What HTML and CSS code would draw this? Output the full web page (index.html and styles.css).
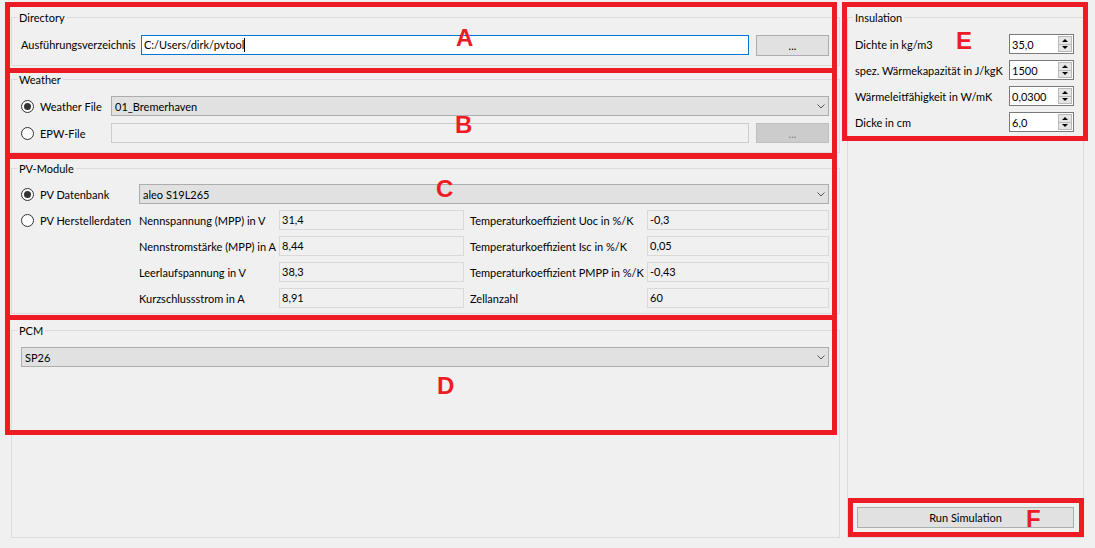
FILE: index.html
```html
<!DOCTYPE html>
<html>
<head>
<meta charset="utf-8">
<link rel="stylesheet" href="styles.css">
</head>
<body>
<div class="window">
  <div class="left">
    <div class="group g-dir">
      <div class="gtitle">Directory</div>
      <div class="dir-row">
        <span class="lbl">Ausführungsverzeichnis</span>
        <div class="field focused">C:/Users/dirk/pvtool<span class="caret"></span></div>
        <div class="btn">...</div>
      </div>
    </div>

    <div class="group g-weather">
      <div class="gtitle">Weather</div>
      <div class="weather-grid">
        <label class="opt"><span class="radio on"></span>Weather File</label>
        <div class="combo span2"><span>01_Bremerhaven</span><svg class="chev" width="8" height="5" viewBox="0 0 8 5"><polyline points="0.5,0.5 4,4 7.5,0.5" fill="none" stroke="#555" stroke-width="1"/></svg></div>
        <label class="opt"><span class="radio"></span>EPW-File</label>
        <div class="field disabled"></div>
        <div class="btn btn-dis">...</div>
      </div>
    </div>

    <div class="group g-pv">
      <div class="gtitle">PV-Module</div>
      <div class="pv-grid">
        <label class="opt"><span class="radio on"></span>PV Datenbank</label>
        <div class="combo pv-combo"><span>aleo S19L265</span><svg class="chev" width="8" height="5" viewBox="0 0 8 5"><polyline points="0.5,0.5 4,4 7.5,0.5" fill="none" stroke="#555" stroke-width="1"/></svg></div>

        <label class="opt"><span class="radio"></span>PV Herstellerdaten</label>
        <span class="plbl">Nennspannung (MPP) in V</span>
        <div class="field ro">31,4</div>
        <span class="plbl plbl2">Temperaturkoeffizient Uoc in %/K</span>
        <div class="field ro">-0,3</div>

        <span class="plbl c2">Nennstromstärke (MPP) in A</span>
        <div class="field ro">8,44</div>
        <span class="plbl plbl2">Temperaturkoeffizient Isc in %/K</span>
        <div class="field ro">0,05</div>

        <span class="plbl c2">Leerlaufspannung in V</span>
        <div class="field ro">38,3</div>
        <span class="plbl plbl2">Temperaturkoeffizient PMPP in %/K</span>
        <div class="field ro">-0,43</div>

        <span class="plbl c2">Kurzschlussstrom in A</span>
        <div class="field ro">8,91</div>
        <span class="plbl plbl2">Zellanzahl</span>
        <div class="field ro">60</div>
      </div>
    </div>

    <div class="group g-pcm">
      <div class="gtitle">PCM</div>
      <div class="combo"><span>SP26</span><svg class="chev" width="8" height="5" viewBox="0 0 8 5"><polyline points="0.5,0.5 4,4 7.5,0.5" fill="none" stroke="#555" stroke-width="1"/></svg></div>
    </div>
  </div>

  <div class="right">
    <div class="group g-ins">
      <div class="gtitle">Insulation</div>
      <div class="ins-rows">
        <div class="ins-row"><span class="ilbl">Dichte in kg/m3</span><div class="spin"><span class="sv">35,0</span><span class="sbtns"><span class="sb up"></span><span class="sb dn"></span></span></div></div>
        <div class="ins-row"><span class="ilbl">spez. Wärmekapazität in J/kgK</span><div class="spin"><span class="sv">1500</span><span class="sbtns"><span class="sb up"></span><span class="sb dn"></span></span></div></div>
        <div class="ins-row"><span class="ilbl">Wärmeleitfähigkeit in W/mK</span><div class="spin"><span class="sv">0,0300</span><span class="sbtns"><span class="sb up"></span><span class="sb dn"></span></span></div></div>
        <div class="ins-row"><span class="ilbl">Dicke in cm</span><div class="spin"><span class="sv">6,0</span><span class="sbtns"><span class="sb up"></span><span class="sb dn"></span></span></div></div>
      </div>
      <div class="spacer"></div>
      <div class="btn run">Run Simulation</div>
    </div>
  </div>

  <div class="mark mark-a"></div>
  <div class="mark mark-b"></div>
  <div class="mark mark-c"></div>
  <div class="mark mark-d"></div>
  <div class="mark mark-e"></div>
  <div class="mark mark-f"></div>
  <span class="tag tag-a">A</span>
  <span class="tag tag-b">B</span>
  <span class="tag tag-c">C</span>
  <span class="tag tag-d">D</span>
  <span class="tag tag-e">E</span>
  <span class="tag tag-f">F</span>
</div>
</body>
</html>
```

FILE: styles.css
```css
* { box-sizing: border-box; }
html, body { margin: 0; padding: 0; }
body {
  background: #f0f0f0;
  font-family: Lato, "Noto Sans", sans-serif;
  font-size: 11px;
  color: #000;
}
.window {
  position: relative;
  width: 1095px;
  height: 548px;
  display: flex;
  gap: 7px;
  padding: 17px 0 10px 11px;
  overflow: hidden;
}
.left { width: 829px; display: flex; flex-direction: column; }
.right { width: 237px; display: flex; flex-direction: column; }

.group { border: 1px solid #dcdcdc; padding: 0 10px 0 9px; }
.gtitle {
  width: max-content;
  height: 14px;
  line-height: 14px;
  margin: -7px 0 0 -4px;
  padding: 0 2px;
  background: #f0f0f0;
}
.g-dir { padding-bottom: 9px; }
.g-weather { margin-top: 13px; padding-bottom: 9px; }
.g-pv { margin-top: 15px; padding-bottom: 5px; }
.g-pcm { margin-top: 16px; flex: 1; }

.dir-row { display: flex; align-items: flex-start; margin-top: 10px; }
.lbl { width: 120px; height: 20px; line-height: 20px; flex: none; white-space: nowrap; }
.dir-row .field { flex: 1; }
.dir-row .btn { width: 73px; height: 21px; margin-left: 7px; }

.field {
  height: 20px;
  line-height: 18px;
  border: 1px solid #d9d9d9;
  background: #f0f0f0;
  padding: 0 2px;
  white-space: nowrap;
  overflow: hidden;
}
.field.focused { border-color: #0078d7; background: #fff; padding-left: 2px; }
.field.disabled { border-color: #cccccc; background: #f0f0f0; }
.caret { display: inline-block; width: 1px; height: 14px; background: #000; vertical-align: -3px; }

.btn {
  display: flex;
  align-items: center;
  justify-content: center;
  height: 20px;
  border: 1px solid #adadad;
  background: #e1e1e1;
}
.btn-dis { background: #cccccc; border-color: #bfbfbf; color: #838383; width: 73px; margin-left: 7px; }

.combo {
  display: flex;
  align-items: center;
  justify-content: space-between;
  height: 20px;
  border: 1px solid #adadad;
  background: #e1e1e1;
  padding: 0 3px;
  white-space: nowrap;
}
.chev { display: block; }

.opt { display: flex; align-items: center; white-space: nowrap; }
.radio {
  width: 13px;
  height: 13px;
  flex: none;
  border: 1px solid #333;
  border-radius: 50%;
  background: #fff;
  margin-right: 6px;
  display: flex;
  align-items: center;
  justify-content: center;
}
.radio.on::after { content: ""; width: 7px; height: 7px; border-radius: 50%; background: #333; }

.weather-grid {
  display: grid;
  grid-template-columns: 90px 1fr 80px;
  grid-auto-rows: 20px;
  row-gap: 7px;
  margin-top: 9px;
}
.span2 { grid-column: 2 / 4; }

.g-pcm .combo { margin-top: 9px; }

.pv-grid {
  display: grid;
  grid-template-columns: 118px 140px 185px 183px 1fr;
  grid-auto-rows: 20px;
  row-gap: 6px;
  margin-top: 8px;
}
.pv-combo { grid-column: 2 / 6; }
.plbl { display: flex; align-items: center; white-space: nowrap; }
.plbl2 { padding-left: 6px; }
.c2 { grid-column: 2; }
.field.ro { padding-left: 2px; }

.g-ins { flex: 1; display: flex; flex-direction: column; padding: 0 9px 9px 7px; }
.g-ins .gtitle { margin-left: -2px; }
.ins-rows { display: flex; flex-direction: column; gap: 6px; margin-top: 9px; }
.ins-row { display: flex; align-items: center; height: 20px; }
.ilbl { flex: 1; white-space: nowrap; }
.spin {
  width: 65px;
  flex: none;
  height: 20px;
  border: 1px solid #7a7a7a;
  background: #fff;
  display: flex;
  align-items: center;
  padding: 1px;
}
.sv { flex: 1; padding-left: 1px; }
.sbtns { width: 14px; height: 100%; display: flex; flex-direction: column; }
.sb {
  flex: 1;
  border: 1px solid #b9b9b9;
  background: #e6e6e6;
  display: flex;
  align-items: center;
  justify-content: center;
}
.sb.dn { border-top: none; }
.sb.up::after { content: ""; border-left: 3px solid transparent; border-right: 3px solid transparent; border-bottom: 3px solid #000; }
.sb.dn::after { content: ""; border-left: 3px solid transparent; border-right: 3px solid transparent; border-top: 3px solid #000; }
.spacer { flex: 1; }
.run { height: 21px; margin-left: 2px; }

.mark { position: absolute; border: 5px solid #ed1c24; }
.mark-a { left: 5px; top: 2px; width: 832px; height: 71px; }
.mark-b { left: 5px; top: 68px; width: 832px; height: 90px; }
.mark-c { left: 5px; top: 154px; width: 832px; height: 166px; }
.mark-d { left: 5px; top: 315px; width: 832px; height: 120px; }
.mark-e { left: 842px; top: 2px; width: 246px; height: 139px; }
.mark-f { left: 848px; top: 498px; width: 236px; height: 39px; }

.tag {
  position: absolute;
  font-family: "Liberation Sans", Arial, sans-serif;
  font-weight: bold;
  font-size: 24px;
  line-height: 24px;
  color: #ed1c24;
}
.tag-a { left: 456px; top: 26px; }
.tag-b { left: 455px; top: 113px; }
.tag-c { left: 436px; top: 177px; }
.tag-d { left: 437px; top: 374px; }
.tag-e { left: 956px; top: 29px; }
.tag-f { left: 1026px; top: 507px; }
```
